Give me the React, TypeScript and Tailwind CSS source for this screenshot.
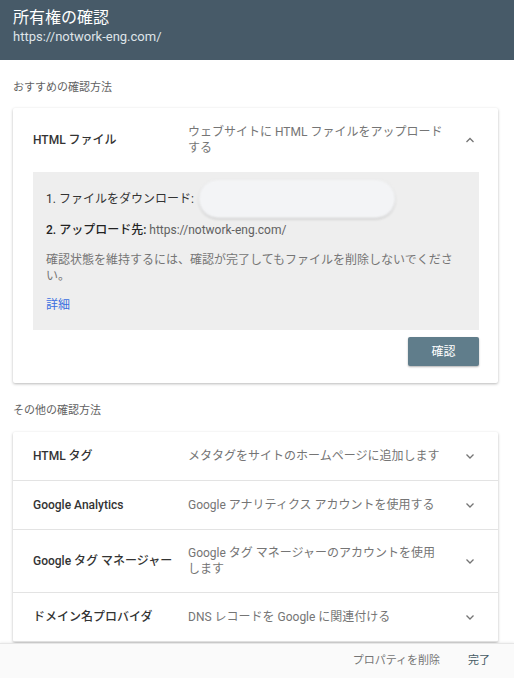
import React from 'react';

const font = { fontFamily: 'Roboto, "Noto Sans CJK JP", sans-serif' };

function Chevron({ up = false }: { up?: boolean }) {
  return (
    <svg width="12" height="12" viewBox="0 0 12 12" className="text-[#757575]">
      <polyline
        points={up ? '2.5,8 6,4.5 9.5,8' : '2.5,4.5 6,8 9.5,4.5'}
        fill="none"
        stroke="currentColor"
        strokeWidth="1.3"
      />
    </svg>
  );
}

const others = [
  { name: 'HTML タグ', desc: 'メタタグをサイトのホームページに追加します' },
  { name: 'Google Analytics', desc: 'Google アナリティクス アカウントを使用する' },
  { name: 'Google タグ マネージャー', desc: 'Google タグ マネージャーのアカウントを使用します' },
  { name: 'ドメイン名プロバイダ', desc: 'DNS レコードを Google に関連付ける' },
];

export default function App() {
  return (
    <div style={font} className="h-[678px] w-[514px] flex flex-col bg-white overflow-hidden">
      <div className="h-[60px] shrink-0 bg-[#475a68] px-[13px] pt-[7px]">
        <div className="text-[16px] leading-[22px] text-white">所有権の確認</div>
        <div className="text-[13px] leading-[16px] text-[#dfe4e8]">https://notwork-eng.com/</div>
      </div>

      <div className="flex-1 overflow-hidden pt-5">
        <div className="px-[13px] text-[11px] leading-4 text-[#616161]">おすすめの確認方法</div>

        <div className="mt-3 ml-[13px] w-[485px] bg-white shadow-[0_1px_3px_rgba(0,0,0,0.28)] rounded-[2px] pb-[17px]">
          <div className="flex items-center py-4 pl-5 pr-[22px]">
            <div className="w-[155px] text-[12px] font-medium text-[#333]">HTML ファイル</div>
            <div className="flex-1 pr-5 text-[12px] leading-4 text-[#757575]">
              ウェブサイトに HTML ファイルをアップロードする
            </div>
            <Chevron up />
          </div>

          <div className="mx-5 mr-[19px] bg-[#eeeeee] pl-[13px] pr-4 pt-2 pb-[17px] text-[12px] leading-4">
            <div className="flex items-center h-[38px]">
              <span className="text-[#333]">1. ファイルをダウンロード:</span>
              <div className="ml-[5px] h-[38px] w-[196px] rounded-[19px] bg-[#f3f4f6] shadow-[0_1px_2px_rgba(0,0,0,0.22)] blur-[1px]" />
            </div>
            <div className="mt-1">
              <span className="font-medium text-[#222]">2. アップロード先: </span>
              <span className="text-[#616161]">https://notwork-eng.com/</span>
            </div>
            <div className="mt-[14px] text-[#757575]">
              確認状態を維持するには、確認が完了してもファイルを削除しないでください。
            </div>
            <div className="mt-[13px] text-[#3b6fe0]">詳細</div>
          </div>

          <div className="flex justify-end mt-[7px] mr-[19px]">
            <button className="h-[29px] w-[71px] rounded-[2px] bg-[#607d8b] text-[12px] text-white shadow-[0_1px_2px_rgba(0,0,0,0.3)]">
              確認
            </button>
          </div>
        </div>

        <div className="mt-5 px-[13px] text-[11px] leading-4 text-[#616161]">その他の確認方法</div>

        <div className="mt-[13px] ml-[13px] w-[485px] bg-white shadow-[0_1px_3px_rgba(0,0,0,0.28)] rounded-[2px]">
          {others.map((o) => (
            <div key={o.name} className="flex items-center py-[15px] pl-5 pr-[22px] border-b border-[#e3e3e3]">
              <div className="w-[155px] text-[12px] font-medium text-[#333]">{o.name}</div>
              <div className="flex-1 pr-5 text-[12px] leading-4 text-[#757575]">{o.desc}</div>
              <Chevron />
            </div>
          ))}
        </div>
      </div>

      <div className="h-[35px] shrink-0 bg-[#fafafa] border-t border-[#e6e6e6] shadow-[0_-1px_2px_rgba(0,0,0,0.06)] flex items-center justify-end gap-[28px] pr-[24px] text-[11px]">
        <span className="text-[#757575]">プロパティを削除</span>
        <span className="text-[#455a64]">完了</span>
      </div>
    </div>
  );
}
